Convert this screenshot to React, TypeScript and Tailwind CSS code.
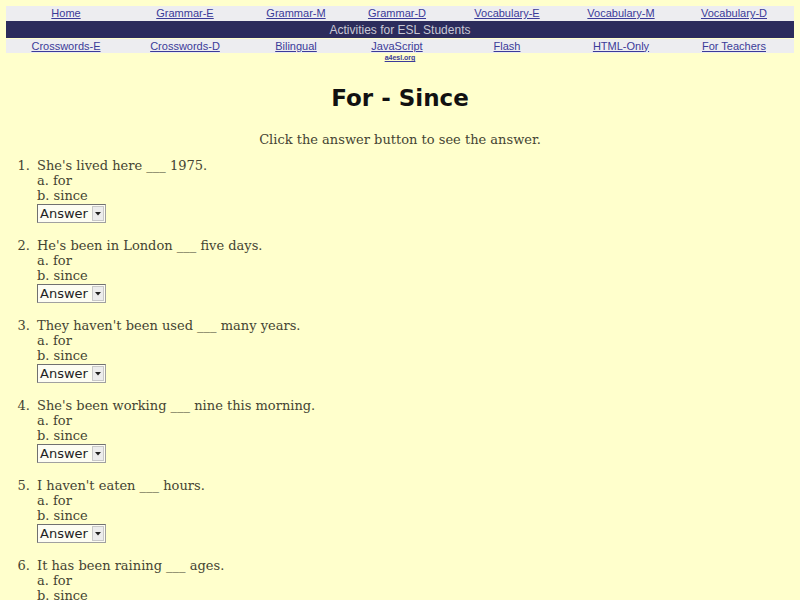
import React from "react";

const row1 = ["Home", "Grammar-E", "Grammar-M", "Grammar-D", "Vocabulary-E", "Vocabulary-M", "Vocabulary-D"];
const row3 = ["Crosswords-E", "Crosswords-D", "Bilingual", "JavaScript", "Flash", "HTML-Only", "For Teachers"];

const questions = [
  "She's lived here ___ 1975.",
  "He's been in London ___ five days.",
  "They haven't been used ___ many years.",
  "She's been working ___ nine this morning.",
  "I haven't eaten ___ hours.",
  "It has been raining ___ ages.",
];

function Select() {
  return (
    <div className="mt-[1px] flex h-[19px] w-[69px] items-center border border-[#a0a0a0] border-l-[#707070] border-t-[#707070] bg-[#fdfdf2]">
      <span className="flex-1 pl-[2px] text-[13px] leading-none text-[#222]" style={{ fontFamily: '"DejaVu Sans", sans-serif' }}>
        Answer
      </span>
      <span className="mr-[1px] flex h-[15px] w-[12px] items-center justify-center border border-[#c8c8c8] bg-[#ececec]">
        <svg width="6" height="4" viewBox="0 0 6 4">
          <path d="M0 0 L6 0 L3 3.5 Z" fill="#222" />
        </svg>
      </span>
    </div>
  );
}

export default function App() {
  const cols = "grid grid-cols-[120px_118px_104px_98px_122px_106px_120px]";
  return (
    <div className="h-[600px] w-[800px] overflow-hidden bg-[#ffffcc] px-[6px] pt-[6px]" style={{ fontFamily: '"DejaVu Serif", serif' }}>
      <div style={{ fontFamily: '"Liberation Sans", Arial, sans-serif' }}>
        <div className={`${cols} h-[15px] items-center bg-[#ededf0] text-[11px] leading-none`}>
          {row1.map((t) => (
            <div key={t} className="text-center text-[#3b3b99] underline">{t}</div>
          ))}
        </div>
        <div className="flex h-[17px] items-center justify-center bg-[#2c2c5c] text-[12px] leading-none text-[#c8c8d4]">
          Activities for ESL Students
        </div>
        <div className={`${cols} mt-[1px] h-[14px] items-center bg-[#ededf0] text-[11px] leading-none`}>
          {row3.map((t) => (
            <div key={t} className="text-center text-[#3b3b99] underline">{t}</div>
          ))}
        </div>
        <div className="mt-[1px] text-center text-[7px] font-bold leading-none text-[#3b3b99] underline">a4esl.org</div>
      </div>

      <h1 className="mt-[26px] text-center text-[23px] font-bold leading-none text-[#111]" style={{ fontFamily: '"DejaVu Sans", sans-serif' }}>
        For - Since
      </h1>
      <p className="mt-[23px] text-center text-[13px] leading-none text-[#444433]">
        Click the answer button to see the answer.
      </p>

      <div className="mt-[12px] text-[13px] leading-[15px] text-[#444433]">
        {questions.map((q, i) => (
          <div key={i} className="mb-[15px] flex">
            <span className="w-[31px] pr-[7px] text-right">{i + 1}.</span>
            <div className="flex flex-col">
              <span>{q}</span>
              <span>a. for</span>
              <span>b. since</span>
              <Select />
            </div>
          </div>
        ))}
      </div>
    </div>
  );
}
